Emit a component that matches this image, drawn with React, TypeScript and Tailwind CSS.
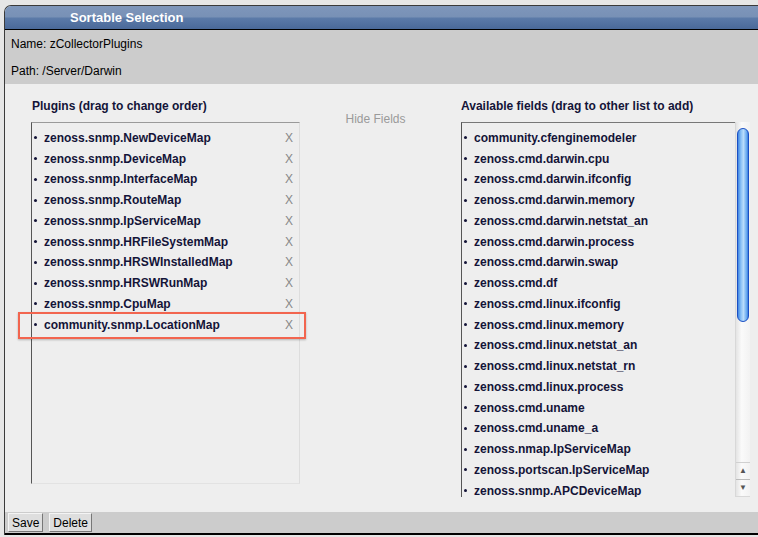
const plugins = [
  "zenoss.snmp.NewDeviceMap",
  "zenoss.snmp.DeviceMap",
  "zenoss.snmp.InterfaceMap",
  "zenoss.snmp.RouteMap",
  "zenoss.snmp.IpServiceMap",
  "zenoss.snmp.HRFileSystemMap",
  "zenoss.snmp.HRSWInstalledMap",
  "zenoss.snmp.HRSWRunMap",
  "zenoss.snmp.CpuMap",
  "community.snmp.LocationMap",
];

const available = [
  "community.cfenginemodeler",
  "zenoss.cmd.darwin.cpu",
  "zenoss.cmd.darwin.ifconfig",
  "zenoss.cmd.darwin.memory",
  "zenoss.cmd.darwin.netstat_an",
  "zenoss.cmd.darwin.process",
  "zenoss.cmd.darwin.swap",
  "zenoss.cmd.df",
  "zenoss.cmd.linux.ifconfig",
  "zenoss.cmd.linux.memory",
  "zenoss.cmd.linux.netstat_an",
  "zenoss.cmd.linux.netstat_rn",
  "zenoss.cmd.linux.process",
  "zenoss.cmd.uname",
  "zenoss.cmd.uname_a",
  "zenoss.nmap.IpServiceMap",
  "zenoss.portscan.IpServiceMap",
  "zenoss.snmp.APCDeviceMap",
];

function Item({ name, removable }: { name: string; removable?: boolean }) {
  return (
    <li className="flex h-[20.75px] items-center whitespace-nowrap">
      <span className="ml-[1px] mr-[7px] h-[3px] w-[3px] shrink-0 rounded-full bg-[#141438]" />
      <span className="flex-1 font-bold text-[#141438]">{name}</span>
      {removable && <span className="mr-[6px] text-[#888]">X</span>}
    </li>
  );
}

export default function App() {
  return (
    <div className="h-[537px] w-[758px] overflow-hidden bg-[#e6e6e6] pl-[4px] pt-[5px] font-['Liberation_Sans',Arial,sans-serif] text-[12px] text-black">
      <div className="flex h-[530px] flex-col overflow-hidden rounded-tl-[7px] border-l border-t border-[#3a3a3a]">
        {/* title bar */}
        <div className="flex h-[24px] shrink-0 items-center border-b border-black bg-[linear-gradient(180deg,#7e96bb_0%,#7891b6_46%,#5b7aa8_54%,#4a6999_100%)] pl-[65px]">
          <span className="text-[13px] font-bold text-white">Sortable Selection</span>
        </div>

        {/* info */}
        <div className="flex h-[54px] shrink-0 flex-col bg-[#cccccc] pl-[6px]">
          <div className="flex h-[27px] items-center">Name: zCollectorPlugins</div>
          <div className="flex h-[27px] items-center">Path: /Server/Darwin</div>
        </div>

        {/* lists */}
        <div className="flex flex-1 bg-[#eeeeee] pl-[26px] pt-[14px]">
          <div className="relative w-[269px] shrink-0">
            <div className="h-[16px] pl-[1px] font-bold leading-[16px] text-[#141438]">
              Plugins (drag to change order)
            </div>
            <ul className="mt-[8px] h-[362px] border-b border-l border-r border-t border-b-[#e2e2e2] border-l-[#555] border-r-[#dddddd] border-t-[#9a9a9a] pl-[1px] pt-[4.5px]">
              {plugins.map((p) => (
                <Item key={p} name={p} removable />
              ))}
            </ul>
            <div className="absolute left-[-13px] top-[214px] h-[27px] w-[288px] border-2 border-[#f2654f] shadow-[0_1px_2px_rgba(0,0,0,0.25)]" />
          </div>

          <div className="w-[161px] shrink-0 pr-[10px] pt-[12px] text-center text-[#9a9a9a]">Hide Fields</div>

          <div className="w-[289px] shrink-0">
            <div className="h-[16px] font-bold leading-[16px] text-[#141438]">
              Available fields (drag to other list to add)
            </div>
            <div className="mt-[8px] flex h-[375px]">
              <ul className="h-full flex-1 overflow-hidden border-l border-t border-l-[#555] border-t-[#777] pl-[1px] pt-[4.5px]">
                {available.map((a) => (
                  <Item key={a} name={a} />
                ))}
              </ul>
              <div className="flex h-full w-[15px] flex-col border-b border-l border-[#d8d8d8] bg-[linear-gradient(90deg,#e4e4e4,#fafafa_40%,#f2f2f2)]">
                <div className="mx-[1px] mt-[6px] h-[194px] rounded-full border border-[#1b4fc4] bg-[linear-gradient(90deg,#3f86e3_0%,#8cc2f6_30%,#b8dcfb_55%,#6aaaf0_85%,#3a7fdc_100%)]" />
                <div className="flex-1" />
                <div className="flex h-[17px] items-center justify-center border-t border-[#d0d0d0] text-[8px] leading-none text-[#555]">
                  ▲
                </div>
                <div className="flex h-[17px] items-center justify-center border-t border-[#bbb] text-[8px] leading-none text-[#555]">
                  ▼
                </div>
              </div>
            </div>
          </div>
        </div>

        {/* footer */}
        <div className="flex h-[23px] shrink-0 items-center gap-[6px] border-b-2 border-black bg-[#cccccc] pl-[3px]">
          <button className="h-[19px] border border-b-[#777] border-l-[#f4f4f4] border-r-[#777] border-t-[#f4f4f4] bg-[#dedede] px-[3px] text-[12px] leading-none text-black">
            Save
          </button>
          <button className="h-[19px] border border-b-[#777] border-l-[#f4f4f4] border-r-[#777] border-t-[#f4f4f4] bg-[#dedede] px-[3px] text-[12px] leading-none text-black">
            Delete
          </button>
        </div>
      </div>
    </div>
  );
}
